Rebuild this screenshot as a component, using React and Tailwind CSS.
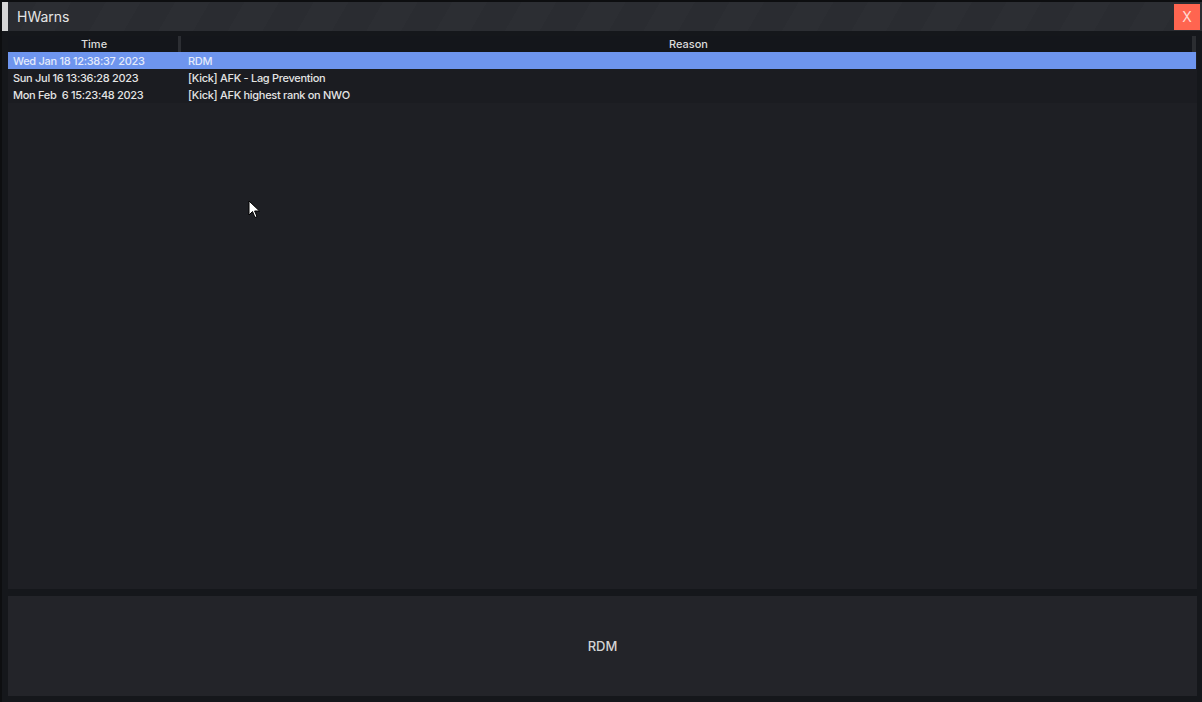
import React from 'react';

const rows = [
  { time: 'Wed Jan 18 12:38:37 2023', reason: 'RDM' },
  { time: 'Sun Jul 16 13:36:28 2023', reason: '[Kick] AFK - Lag Prevention' },
  { time: 'Mon Feb  6 15:23:48 2023', reason: '[Kick] AFK highest rank on NWO' },
];

const font = { fontFamily: 'Inter, "Noto Sans", sans-serif' };

const Cursor = () => (
  <svg className="absolute left-[248px] top-[200px]" width="14" height="20" viewBox="0 0 14 20">
    <path d="M1 1 L1 15 L4.5 11.5 L7 17.5 L9 16.6 L6.6 11 L11.5 11 Z" fill="#ffffff" stroke="#000000" strokeWidth="1" />
  </svg>
);

export default function App() {
  const selected = 0;

  return (
    <div className="relative w-[1202px] h-[702px] bg-[#0d0e10] pt-[2px] pl-[2px] overflow-hidden" style={font}>
      <div className="flex flex-col w-[1200px] h-[700px]">
        {/* title bar */}
        <div className="h-[29px] flex items-center bg-[repeating-linear-gradient(120deg,#2a2c31_0px,#2a2c31_30px,#2c2e33_30px,#2c2e33_60px)]">
          <div className="w-[6px] h-full bg-[#d6d6d6]" />
          <span className="ml-[9px] pt-[1px] text-[14px] text-[#e4e4e4] leading-none">HWarns</span>
          <button className="ml-auto mr-[2px] w-[26px] h-[26px] bg-[#ff6550] text-[#ffd9d2] text-[14px] flex items-center justify-center leading-none">
            X
          </button>
        </div>

        {/* body */}
        <div className="flex-1 flex flex-col bg-[#15171b] pl-[6px] pr-[5px] pt-[5px] pb-[6px]">
          <div className="h-[553px] flex flex-col bg-[#1e1f24]">
            <div className="h-[16px] flex bg-[#14161b] text-[11px] font-medium text-[#dcdcdc] leading-none">
              <div className="w-[170px] flex items-center justify-center pt-[1px] pl-[2px]">Time</div>
              <div className="w-[3px] bg-[#2c2e33]" />
              <div className="flex-1 flex items-center justify-center pt-[1px] pl-[4px]">Reason</div>
              <div className="w-[4px] bg-[#2b2d31]" />
              <div className="w-[1px]" />
            </div>
            {rows.map((r, i) => (
              <div
                key={i}
                className={`h-[17px] pt-[1px] flex items-center text-[11px] font-medium tracking-[-0.3px] leading-none whitespace-pre ${
                  i === selected ? 'bg-[#6e95ee] text-[#e3eafb] mr-[1px]' : 'bg-[#1b1c21] text-[#e4e4e4]'
                }`}
              >
                <div className="w-[173px] pl-[5px]">{r.time}</div>
                <div className="flex-1 pl-[7px]">{r.reason}</div>
              </div>
            ))}
          </div>

          <div className="mt-[7px] flex-1 bg-[#232429] flex items-center justify-center pt-[2px]">
            <span className="text-[13px] font-medium text-[#d4d4d4]">RDM</span>
          </div>
        </div>
      </div>
      <Cursor />
    </div>
  );
}
